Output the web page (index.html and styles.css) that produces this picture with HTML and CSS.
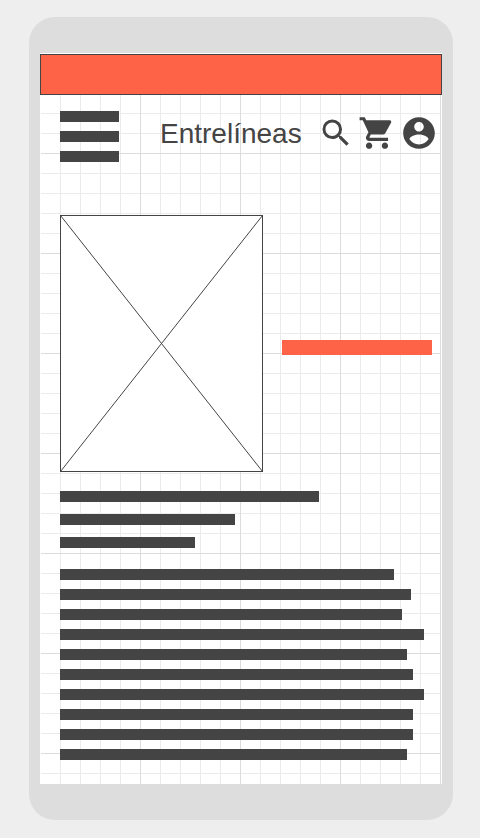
FILE: index.html
```html
<!DOCTYPE html>
<html lang="es">
<head>
<meta charset="utf-8">
<meta name="viewport" content="width=device-width, initial-scale=1">
<title>Entrelíneas</title>
<link rel="stylesheet" href="styles.css">
</head>
<body>
<div class="phone">
  <div class="screen">
    <div class="banner"></div>
    <header class="toolbar">
      <button class="burger" type="button" aria-label="Menú"><span></span><span></span><span></span></button>
      <h1 class="brand">Entrelíneas</h1>
      <nav class="actions">
        <button class="icon" type="button" aria-label="Buscar">
          <svg width="36" height="36" viewBox="0 0 24 24"><path d="M15.5 14h-.79l-.28-.27A6.471 6.471 0 0 0 16 9.5 6.5 6.5 0 1 0 9.5 16c1.61 0 3.09-.59 4.23-1.57l.27.28v.79l5 4.99L20.49 19l-4.99-5zm-6 0C7.01 14 5 11.99 5 9.5S7.01 5 9.5 5 14 7.01 14 9.5 11.99 14 9.5 14z"/></svg>
        </button>
        <button class="icon" type="button" aria-label="Carrito">
          <svg width="38" height="38" viewBox="0 0 24 24"><path d="M7 18c-1.1 0-1.99.9-1.99 2S5.9 22 7 22s2-.9 2-2-.9-2-2-2zM1 2v2h2l3.6 7.59-1.35 2.45c-.16.28-.25.61-.25.96 0 1.1.9 2 2 2h12v-2H7.42c-.14 0-.25-.11-.25-.25l.03-.12.9-1.63h7.45c.75 0 1.41-.41 1.75-1.03l3.58-6.49c.08-.14.12-.31.12-.48 0-.55-.45-1-1-1H5.21l-.94-2H1zm16 16c-1.1 0-1.99.9-1.99 2s.89 2 1.99 2 2-.9 2-2-.9-2-2-2z"/></svg>
        </button>
        <button class="icon" type="button" aria-label="Cuenta">
          <svg width="38" height="38" viewBox="0 0 24 24"><path d="M12 2C6.480 2 2 6.480 2 12s4.480 10 10 10 10-4.480 10-10S17.520 2 12 2zm0 3c1.660 0 3 1.340 3 3s-1.340 3-3 3-3-1.340-3-3 1.340-3 3-3zm0 14.200c-2.500 0-4.710-1.280-6-3.220.03-1.990 4-3.080 6-3.080 1.990 0 5.970 1.090 6 3.080-1.290 1.940-3.500 3.220-6 3.220z"/></svg>
        </button>
      </nav>
    </header>
    <main class="content">
      <section class="product">
        <svg class="cover" viewBox="0 0 203 257" aria-hidden="true">
          <rect x="0.5" y="0.5" width="202" height="256"/>
          <path d="M0.5 0.5L202.5 256.5M202.5 0.5L0.5 256.5"/>
        </svg>
        <div class="price"><div class="price-bar"></div></div>
      </section>
      <section class="summary">
        <div class="line" style="width:69.6%"></div>
        <div class="line" style="width:47%"></div>
        <div class="line" style="width:36.3%"></div>
      </section>
      <section class="description">
        <div class="line" style="width:89.8%"></div>
        <div class="line" style="width:94.4%"></div>
        <div class="line" style="width:92%"></div>
        <div class="line" style="width:97.8%"></div>
        <div class="line" style="width:93.3%"></div>
        <div class="line" style="width:94.9%"></div>
        <div class="line" style="width:97.8%"></div>
        <div class="line" style="width:94.9%"></div>
        <div class="line" style="width:94.9%"></div>
        <div class="line" style="width:93.3%"></div>
      </section>
    </main>
  </div>
</div>
</body>
</html>
```
FILE: styles.css
```css
:root {
  --ink: #444;
  --accent: #ff6347;
  --minor: #ebebeb;
  --major: #dcdcdc;
}

* {
  box-sizing: border-box;
}

body {
  margin: 0;
  padding: 17px 27px 18px 29px;
  background: #eee;
  color: var(--ink);
  font-family: "Liberation Sans", Arial, sans-serif;
}

.phone {
  padding: 36px 11px;
  border-radius: 26px;
  background: #ddd;
}

/* Graph paper: a faint line every 20px, a stronger one every 100px */
.screen {
  border: 1px solid #fff;
  border-bottom: 0;
  background-color: #fff;
  background-image:
    linear-gradient(to right, transparent 99px, var(--major) 99px),
    linear-gradient(to bottom, transparent 99px, var(--major) 99px),
    linear-gradient(to right, transparent 19px, var(--minor) 19px),
    linear-gradient(to bottom, transparent 19px, var(--minor) 19px);
  background-size: 100px 100px, 100px 100px, 20px 20px, 20px 20px;
  background-clip: padding-box;
}

.banner {
  height: 41px;
  margin: 0 -1px;
  border: 1px solid var(--ink);
  background: var(--accent);
}

.toolbar {
  display: flex;
  align-items: flex-start;
  padding: 16px 3px 0 19px;
}

button {
  padding: 0;
  border: 0;
  background: none;
  color: inherit;
  cursor: pointer;
}

.burger {
  display: flex;
  flex-direction: column;
  gap: 9px;
  width: 59px;
}

.burger span {
  height: 11px;
  background: var(--ink);
}

.brand {
  margin: 0 0 0 41px;
  padding-top: 3px;
  font-size: 28px;
  font-weight: 400;
  line-height: 40px;
}

.actions {
  display: flex;
  align-items: center;
  gap: 4px;
  margin-left: auto;
  padding-top: 3px;
}

.icon svg {
  display: block;
  fill: currentColor;
}

.content {
  padding: 53px 9px 24px 19px;
}

.product {
  display: grid;
  grid-template-columns: 203fr 150fr;
  align-items: center;
  gap: 19px;
}

.cover {
  display: block;
  width: 100%;
  fill: #fff;
  stroke: var(--ink);
  stroke-width: 1px;
}

.price {
  padding-top: 8px;
}

.price-bar {
  height: 15px;
  background: var(--accent);
}

.line {
  height: 11px;
  background: var(--ink);
}

.summary,
.description {
  display: flex;
  flex-direction: column;
}

.summary {
  gap: 12px;
  margin-top: 19px;
}

.description {
  gap: 9px;
  margin-top: 21px;
}
```
